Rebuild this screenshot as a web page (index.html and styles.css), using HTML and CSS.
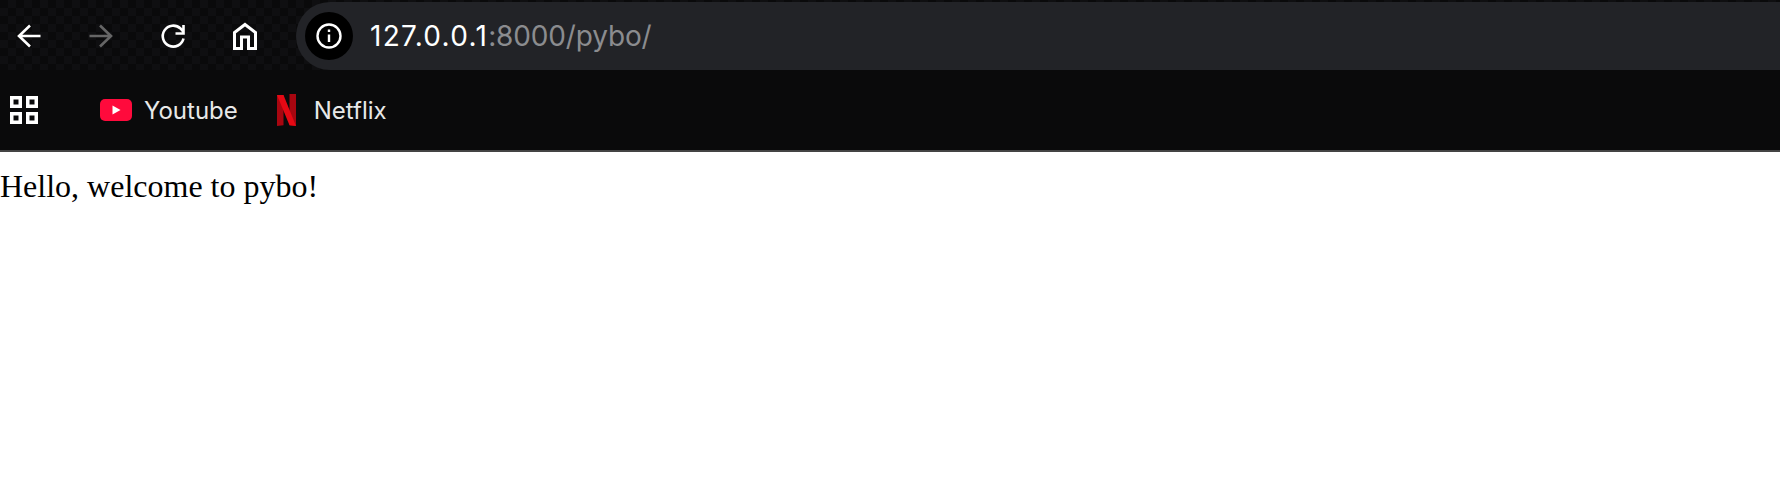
FILE: index.html
```html
<!DOCTYPE html>
<html lang="en">
<head>
  <meta charset="UTF-8">
  <title>127.0.0.1:8000/pybo/</title>
  <link rel="stylesheet" href="styles.css">
</head>
<body>
  <div class="browser">
    <div class="toolbar">
      <div class="nav">
        <svg class="nav-icon" viewBox="0 0 28 28"><path d="M25.500 14H4.500M15 3.500 4 14l11 10.500" /></svg>
        <svg class="nav-icon disabled" viewBox="0 0 28 28"><path d="M2.500 14H23.500M13 3.500 24 14 13 24.500" /></svg>
        <svg class="nav-icon" viewBox="0 0 28 28"><path d="M24.500 16.500A10.500 10.500 0 1 1 21.500 6.500L24.500 10M24.500 3V11.500H16.500" /></svg>
        <svg class="nav-icon home" viewBox="0 0 28 28"><path d="M14 2.500 24.500 10.500V26.500H17.500V15H10.500V26.500H3.500V10.500Z" /></svg>
      </div>
      <div class="address">
        <div class="site-info">
          <svg class="info-icon" viewBox="0 0 28 28">
            <circle cx="14" cy="14" r="11.500" />
            <path d="M14 12.500V20M14 7.500V10" />
          </svg>
        </div>
        <div class="url"><span class="url-host">127.0.0.1</span><span class="url-rest">:8000/pybo/</span></div>
      </div>
    </div>
    <div class="bookmarks">
      <svg class="apps" viewBox="0 0 28 28"><path d="M1.750 1.750h8.500v8.500H1.750zM17.750 1.750h8.500v8.500H17.750zM1.750 17.750h8.500v8.500H1.750zM17.750 17.750h8.500v8.500H17.750z" /></svg>
      <div class="bookmark youtube">
        <svg class="yt-logo" viewBox="0 0 32 22">
          <rect width="32" height="22" rx="5" fill="#ff0a3c" />
          <path d="M12.500 6.500 20.500 11l-8 4.500Z" fill="#fff" />
        </svg>
        <span>Youtube</span>
      </div>
      <div class="bookmark netflix">
        <svg class="nf-logo" viewBox="0 0 19 32">
          <path d="M0 1h6.500v30.200L0 32Z" fill="#a80610" />
          <path d="M12.500 0H19v32l-6.500-.8Z" fill="#a80610" />
          <path d="M0 1h6.500L19 32l-6.500-.8Z" fill="#e50914" />
        </svg>
        <span>Netflix</span>
      </div>
    </div>
  </div>
  <p class="content">Hello, welcome to pybo!</p>
</body>
</html>
```

FILE: styles.css
```css
body {
  margin: 0;
  background: #fff;
  color: #000;
  font-family: "Liberation Serif", serif;
}
.browser {
  background-color: #0a0a0b;
  border-bottom: 2px solid #444;
  font-family: Inter, sans-serif;
}
.toolbar {
  display: flex;
  height: 70px;
  padding-top: 2px;
  box-sizing: border-box;
  background-image: conic-gradient(#0f0f11 25%, #0a0a0b 0 50%, #0f0f11 0 75%, #0a0a0b 0);
  background-size: 16px 16px;
}
.nav {
  display: flex;
  align-items: center;
  width: 296px;
  flex-shrink: 0;
  padding-left: 15px;
  box-sizing: border-box;
  gap: 44px;
}
.nav-icon {
  width: 28px;
  height: 28px;
  fill: none;
  stroke: #fff;
  stroke-width: 2.600;
}
.nav-icon.disabled {
  stroke: #666;
}
.nav-icon.home {
  stroke-width: 3;
}
.address {
  flex: 1;
  display: flex;
  align-items: center;
  background: #222327;
  border-radius: 34px 0 0 34px;
  padding-left: 9px;
}
.site-info {
  display: flex;
  align-items: center;
  justify-content: center;
  width: 48px;
  height: 48px;
  border-radius: 50%;
  background: #000;
}
.info-icon {
  width: 28px;
  height: 28px;
  fill: none;
  stroke: #fff;
  stroke-width: 2.400;
}
.url {
  margin-left: 17px;
  color: #fff;
  font-size: 28px;
}
.url-host {
  letter-spacing: 1.300px;
}
.url-rest {
  color: #8b8c8f;
  letter-spacing: -0.150px;
}
.bookmarks {
  display: flex;
  align-items: center;
  height: 80px;
}
.apps {
  width: 28px;
  height: 28px;
  margin-left: 10px;
  fill: none;
  stroke: #fff;
  stroke-width: 3.500;
}
.bookmark {
  display: flex;
  align-items: center;
  color: #e8e8e8;
  font-size: 24px;
}
.youtube {
  margin-left: 62px;
}
.yt-logo {
  width: 32px;
  height: 22px;
  margin-right: 12px;
}
.netflix {
  margin-left: 39px;
}
.nf-logo {
  width: 19px;
  height: 32px;
  margin-right: 18px;
}
.content {
  margin: 0;
  padding-top: 16px;
  font-size: 32px;
}
```
